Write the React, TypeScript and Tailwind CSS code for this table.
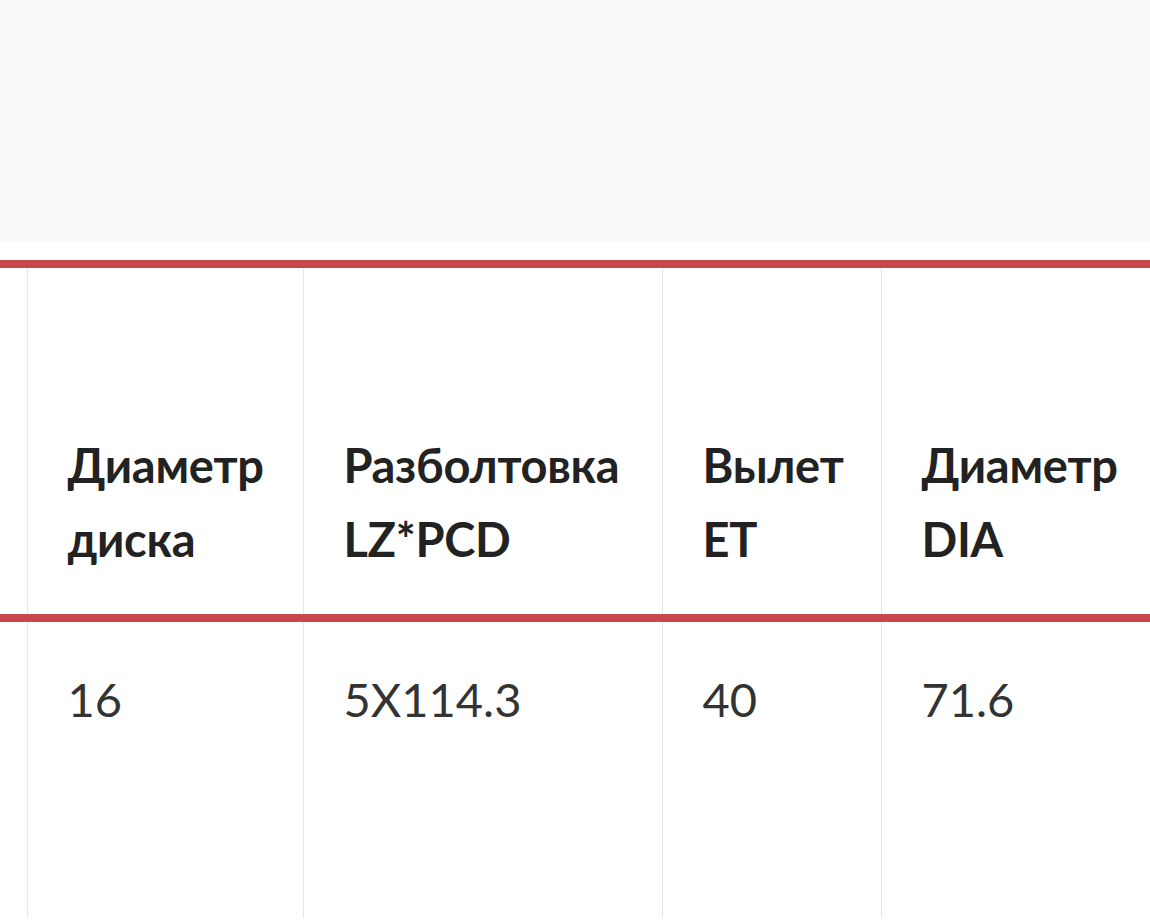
const columns = [
  { key: 'diameter', lines: ['Диаметр', 'диска'], width: 'w-[276px]' },
  { key: 'pcd', lines: ['Разболтовка', 'LZ*PCD'], width: 'w-[359px]' },
  { key: 'et', lines: ['Вылет', 'ET'], width: 'w-[219px]' },
  { key: 'dia', lines: ['Диаметр', 'DIA'], width: 'w-[330px]' },
];

const row = { diameter: '16', pcd: '5X114.3', et: '40', dia: '71.6' };

export default function App() {
  return (
    <div className="h-[921px] w-[1150px] overflow-hidden bg-white font-['Lato','Noto_Sans',sans-serif]">
      <div className="h-[242px] bg-[#f9f9f9]" />
      <div className="h-[18px] bg-white" />
      <table className="w-[1211px] table-fixed border-collapse">
        <thead>
          <tr className="border-y-[8px] border-[#c6484c]">
            <th className="w-[27px] border-r border-[#e6e6e6]" />
            {columns.map((col) => (
              <th
                key={col.key}
                className={`${col.width} h-[354px] border-r border-[#e6e6e6] px-[40px] pb-[38px] text-left align-bottom text-[47px] font-bold leading-[74px] tracking-[-0.3px] text-[#222]`}
              >
                {col.lines.map((line) => (
                  <div key={line}>{line}</div>
                ))}
              </th>
            ))}
          </tr>
        </thead>
        <tbody>
          <tr>
            <td className="h-[300px] border-r border-[#e6e6e6]" />
            {columns.map((col) => (
              <td
                key={col.key}
                className="border-r border-[#e6e6e6] px-[40px] pt-[40px] align-top text-[47px] leading-[75px] text-[#333]"
              >
                {row[col.key as keyof typeof row]}
              </td>
            ))}
          </tr>
        </tbody>
      </table>
    </div>
  );
}
